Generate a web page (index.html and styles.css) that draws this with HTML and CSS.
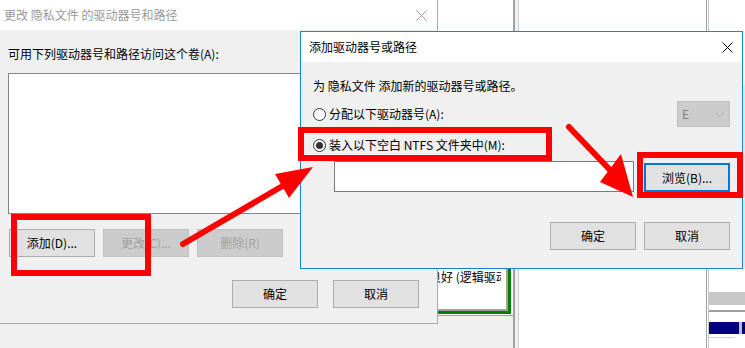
FILE: index.html
```html
<!DOCTYPE html>
<html lang="zh-CN">
<head>
<meta charset="utf-8">
<title>添加驱动器号或路径</title>
<link rel="stylesheet" href="styles.css">
</head>
<body>
<div class="desktop">
  <div class="bgapp">
    <div class="col-a">
      <div class="part-area">
        <div class="partition">
          <div class="part-inner"><span class="part-text">状态良好 (逻辑驱动器)</span></div>
        </div>
      </div>
      <div class="col-a-bottom"></div>
    </div>
    <div class="divider1"></div>
    <div class="col-b"></div>
    <div class="divider2"></div>
    <div class="col-c">
      <div class="sel-strip"></div>
      <div class="gray-bar"></div>
      <div class="rule"></div>
      <div class="navy"><span class="n1"></span><span class="nsep"></span><span class="n2"></span></div>
      <div class="rule2"></div>
    </div>
  </div>

  <section class="win win-parent">
    <div class="titlebar">
      <span class="title">更改 隐私文件 的驱动器号和路径</span>
      <svg class="close" width="11" height="11" viewBox="0 0 11 11"><path d="M0.5 0.5 L10.5 10.5 M10.5 0.5 L0.5 10.5" stroke="#999" stroke-width="1" fill="none"/></svg>
    </div>
    <div class="body">
      <div class="label">可用下列驱动器号和路径访问这个卷(A):</div>
      <div class="listbox"></div>
      <div class="btnrow">
        <button class="btn">添加(D)...</button>
        <button class="btn disabled">更改(C)...</button>
        <button class="btn disabled">删除(R)</button>
      </div>
      <div class="okrow">
        <button class="btn">确定</button>
        <button class="btn">取消</button>
      </div>
    </div>
  </section>

  <section class="win win-child">
    <div class="titlebar">
      <span class="title">添加驱动器号或路径</span>
      <svg class="close" width="11" height="11" viewBox="0 0 11 11"><path d="M0.5 0.5 L10.5 10.5 M10.5 0.5 L0.5 10.5" stroke="#000" stroke-width="1" fill="none"/></svg>
    </div>
    <div class="body">
      <div class="desc">为 隐私文件 添加新的驱动器号或路径。</div>
      <div class="optrow">
        <span class="radio"></span>
        <span class="optlabel">分配以下驱动器号(A):</span>
        <div class="combo">
          <span>E</span>
          <svg width="9" height="5" viewBox="0 0 9 5"><polyline points="0.5,0.5 4.5,4.5 8.5,0.5" fill="none" stroke="#a6a6a6" stroke-width="1"/></svg>
        </div>
      </div>
      <div class="optrow2">
        <span class="radio checked"></span>
        <span class="optlabel">装入以下空白 NTFS 文件夹中(M):</span>
      </div>
      <div class="pathrow">
        <div class="textbox"></div>
        <button class="btn default">浏览(B)...</button>
      </div>
      <div class="dlgrow">
        <button class="btn">确定</button>
        <button class="btn">取消</button>
      </div>
    </div>
  </section>

  <svg class="annot" width="745" height="348" viewBox="0 0 745 348">
    <g fill="none" stroke="#ff0000" stroke-width="6">
      <rect x="14" y="217" width="134" height="56"/>
      <rect x="301" y="130" width="248" height="28"/>
      <rect x="640" y="155" width="100" height="40"/>
    </g>
    <g stroke="#ff0000" stroke-width="6" stroke-linecap="round">
      <line x1="183" y1="244" x2="286" y2="184"/>
      <line x1="569" y1="127" x2="611" y2="171"/>
    </g>
    <g fill="#ff0000">
      <polygon points="313,167 275,174 289,198"/>
      <polygon points="633,197 600,182 621,154"/>
    </g>
  </svg>
</div>
</body>
</html>
```

FILE: styles.css
```css
* { box-sizing: border-box; }
html, body { margin: 0; padding: 0; }
body {
  width: 745px;
  height: 348px;
  overflow: hidden;
  background: #f0f0f0;
  font-family: "Noto Sans CJK SC", "Noto Sans", sans-serif;
  font-size: 12px;
  line-height: 16px;
  color: #000;
}
.desktop { position: relative; width: 745px; height: 348px; overflow: hidden; }

/* background disk-management window */
.bgapp {
  position: absolute;
  left: 380px;
  top: 0;
  width: 365px;
  height: 348px;
  display: flex;
  background: #fff;
}
.col-a { width: 133px; display: flex; flex-direction: column; }
.part-area {
  height: 316px;
  background: #fff;
  border-bottom: 1px solid #a0a0a0;
  padding: 0 2px 1px 4px;
  display: flex;
  flex-direction: column;
  justify-content: flex-end;
}
.partition { border-right: 3px solid #008000; border-bottom: 3px solid #008000; }
.part-inner {
  border-right: 2px solid #a0a0a0;
  border-bottom: 2px solid #a0a0a0;
  padding: 4px 5px 24px 21px;
  background: #fff;
}
.part-text { display: block; white-space: nowrap; overflow: hidden; }
.col-a-bottom { flex: 1; background: #f0f0f0; }
.divider1 {
  width: 6px;
  border-left: 2px solid #a0a0a0;
  border-right: 1px solid #d0d0d0;
  background: #f0f0f0;
}
.col-b { width: 187px; background: #fff; }
.divider2 {
  width: 3px;
  border-left: 1px solid #a0a0a0;
  border-right: 1px solid #c8c8c8;
  background: #fff;
}
.col-c { flex: 1; display: flex; flex-direction: column; background: #fff; }
.sel-strip { margin-top: 85px; height: 183px; background: #d9ebf9; }
.gray-bar { margin-top: 24px; height: 13px; background: #c8c8c8; }
.rule { margin-top: 5px; height: 2px; background: #a0a0a0; }
.navy { margin-top: 10px; height: 12px; display: flex; }
.navy .n1 { width: 30px; background: #000080; }
.navy .nsep { width: 3px; background: #c0c0c0; }
.navy .n2 { flex: 1; background: #000080; }
.rule2 { margin-top: 3px; height: 1px; width: 26px; background: #d0d0d0; }

/* windows */
.win { position: absolute; display: flex; flex-direction: column; background: #f0f0f0; }
.titlebar {
  flex: none;
  height: 30px;
  background: #fff;
  display: flex;
  align-items: center;
  justify-content: space-between;
}
.close { display: block; flex: none; }
.body { flex: 1; display: flex; flex-direction: column; }

.win-parent {
  left: 0;
  top: 0;
  width: 438px;
  height: 324px;
  border-right: 1px solid #aaaaaa;
  border-bottom: 1px solid #aaaaaa;
}
.win-parent .titlebar { padding: 0 10px 0 4px; color: #999; }
.win-parent .body { padding: 16px 8px 0 8px; }
.label { height: 16px; white-space: nowrap; }
.listbox { margin-top: 11px; height: 141px; background: #fff; border: 1px solid #828790; }
.btnrow { display: flex; gap: 8px; margin-top: 15px; padding-left: 1px; }
.okrow { display: flex; justify-content: flex-end; gap: 15px; margin-top: 23px; padding-right: 10px; }

.btn {
  width: 86px;
  height: 28px;
  padding: 0;
  border: 1px solid #adadad;
  background: #e1e1e1;
  font: inherit;
  color: #000;
  display: flex;
  align-items: center;
  justify-content: center;
  flex: none;
}
.btn.disabled { background: #cccccc; border-color: #bfbfbf; color: #a0a0a0; }
.btn.default { border: 2px solid #0078d7; height: 29px; }

.win-child {
  left: 300px;
  top: 31px;
  width: 443px;
  height: 238px;
  border: 1px solid #1883d7;
}
.win-child .titlebar { padding: 0 9px 0 8px; }
.win-child .body { padding: 16px 12px 0 12px; }
.desc { height: 16px; white-space: nowrap; }
.optrow { display: flex; align-items: center; height: 26px; margin-top: 7px; }
.optrow2 { display: flex; align-items: center; height: 16px; margin-top: 10px; }
.radio {
  flex: none;
  width: 13px;
  height: 13px;
  border: 1px solid #333;
  border-radius: 50%;
  background: #fff;
  display: flex;
  align-items: center;
  justify-content: center;
}
.radio.checked::after {
  content: "";
  width: 7px;
  height: 7px;
  border-radius: 50%;
  background: #333;
}
.optlabel { margin-left: 3px; white-space: nowrap; }
.combo {
  margin-left: auto;
  width: 53px;
  height: 26px;
  border: 1px solid #bfbfbf;
  background: #cccccc;
  color: #838383;
  display: flex;
  align-items: center;
  justify-content: space-between;
  padding: 0 5px 0 4px;
}
.combo svg { display: block; }
.pathrow { display: flex; align-items: flex-end; gap: 10px; margin-top: 8px; padding-left: 21px; }
.textbox { width: 300px; height: 31px; background: #fff; border: 1px solid #7a7a7a; flex: none; }
.dlgrow { display: flex; justify-content: flex-end; gap: 8px; margin-top: 30px; }

.annot { position: absolute; left: 0; top: 0; pointer-events: none; }
```
